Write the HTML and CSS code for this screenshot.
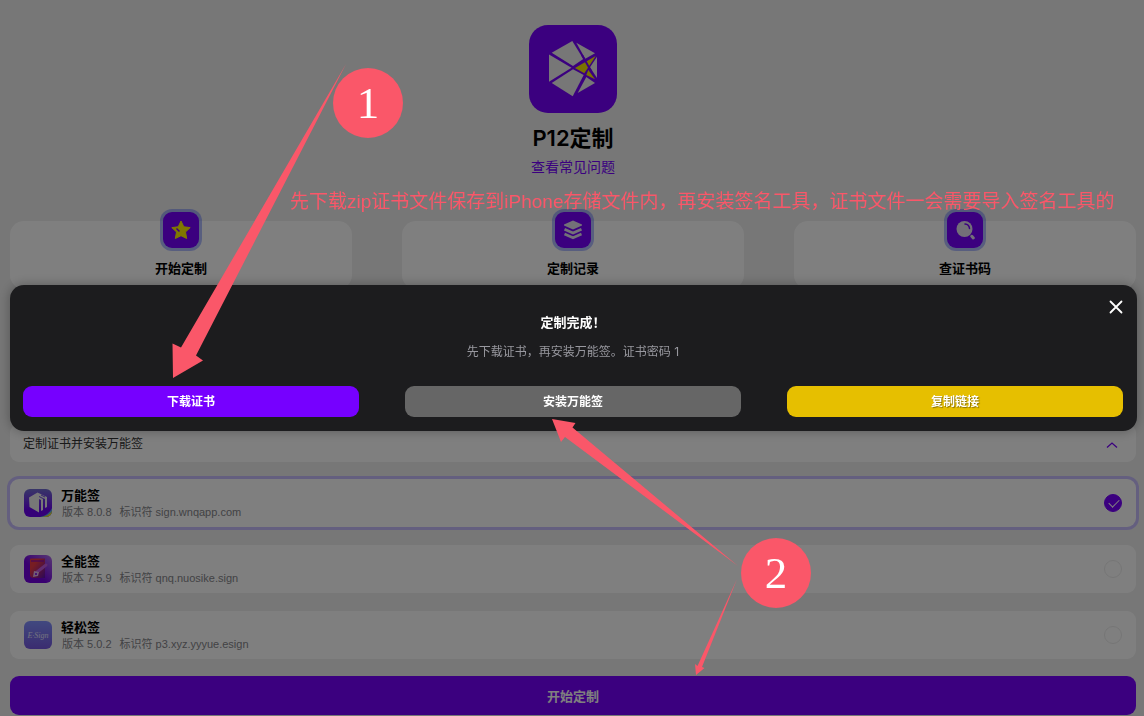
FILE: index.html
```html
<!DOCTYPE html>
<html lang="zh-CN">
<head>
    <meta charset="UTF-8">
    <meta name="viewport" content="width=device-width, initial-scale=1.0">
    <title>P12定制</title>
    <link rel="stylesheet" href="styles.css">
</head>
<body>
    <main class="page">
        <header class="header">
            <svg class="header__logo" viewBox="0 0 88 88">
                <rect width="88" height="88" rx="19" fill="#7600ff"/>
                <g fill="#eee">
                    <path d="M20 29.5 42.5 42.7 20 56.7z"/>
                    <path d="M22.7 27.7 43.3 16 54.3 34 44 41z"/>
                    <path d="M47.3 17.7 66 28.3 56.3 33.7z"/>
                    <path d="M68 31.7V53L61 42.3z"/>
                    <path d="M22.7 58 44 44.3 54.7 50 43.7 71.3z"/>
                    <path d="M57.3 52 66 58 48.7 68z"/>
                </g>
                <path d="M46 43 66.7 31 55.3 48.3zM59.3 45 66 54.3 57.3 50z" fill="#f4e400"/>
                <path d="M53 30 62 46" stroke="#7600ff" stroke-width="2"/>
            </svg>
            <h1 class="header__title">P12定制</h1>
            <a class="header__link" href="#">查看常见问题</a>
        </header>

        <nav class="features">
            <a class="feature" href="#">
                <span class="feature__icon">
                    <svg viewBox="0 0 20 20"><path d="M10 1l2.8 5.8 6.4.8-4.7 4.4 1.2 6.5L10 15.7 4.3 18.5 5.5 12 .8 7.6l6.4-.8z" fill="#fff000" stroke="#fff000" stroke-linejoin="round"/><path d="M5.5 8.5 8.5 11.5" stroke="#7600ff" stroke-width="1.5"/></svg>
                </span>
                <span class="feature__label">开始定制</span>
            </a>
            <a class="feature" href="#">
                <span class="feature__icon">
                    <svg viewBox="0 0 20 20"><path d="M10 .5 19 4.5v1L10 9.500 1 5.500v-1z" fill="#e6e0f0"/><path d="M1.5 9.200 10 13l8.500-3.800M1.500 14 10 17.800 18.500 14" fill="none" stroke="#e6e0f0" stroke-width="2.6"/></svg>
                </span>
                <span class="feature__label">定制记录</span>
            </a>
            <a class="feature" href="#">
                <span class="feature__icon">
                    <svg viewBox="0 0 20 20"><circle cx="9.5" cy="9" r="8" fill="#e6e0f0"/><path d="M10 4a5 5 0 0 1 4.500 4.500" fill="none" stroke="#7600ff" stroke-width="1.5" stroke-linecap="round"/><path d="M16.800 16.300 18.300 18" stroke="#e6e0f0" stroke-width="3" stroke-linecap="round"/></svg>
                </span>
                <span class="feature__label">查证书码</span>
            </a>
        </nav>

        <button type="button" class="collapse">
            <span>定制证书并安装万能签</span>
            <svg class="collapse__arrow" viewBox="0 0 12 12"><path d="M1 9.5 6 5l5 4.500" fill="none" stroke="#7600ff" stroke-width="1.3"/></svg>
        </button>

        <div class="tools">
            <label class="tool tool_active">
                <svg class="tool__icon" viewBox="0 0 28 28">
                    <defs>
                        <linearGradient id="wn" x1="0" y1="0" x2="0" y2="1"><stop offset="0" stop-color="#716dd0"/><stop offset=".75" stop-color="#6a00f0"/></linearGradient>
                        <clipPath id="round"><rect width="28" height="28" rx="6"/></clipPath>
                    </defs>
                    <g clip-path="url(#round)">
                        <rect width="28" height="28" fill="url(#wn)"/>
                        <path d="M16 28q9-2 12-9v9z" fill="#5aa8e8"/>
                        <path d="M18 28q7-1 10-6v6z" fill="#f0e020"/>
                        <path d="M5 8.500 13.500 3.500 23 8v10l-2 1V10l-2-1v12l-2 1V11l-2-1v13.500L5.500 18z" fill="#eee"/>
                        <path d="M15 7.500 19 9.500M17 6l4 2" stroke="#6d4be0"/>
                    </g>
                </svg>
                <span class="tool__text">
                    <span class="tool__name">万能签</span>
                    <span class="tool__info"><span>版本 8.0.8</span><span>标识符 sign.wnqapp.com</span></span>
                </span>
                <input class="tool__radio" type="radio" name="tool" checked>
            </label>
            <label class="tool">
                <svg class="tool__icon" viewBox="0 0 28 28">
                    <defs>
                        <linearGradient id="qn" x1="0" y1="1" x2="1" y2="0"><stop offset=".4" stop-color="#7200e0"/><stop offset="1" stop-color="#b070e8"/></linearGradient>
                        <linearGradient id="book" x1="0" y1="0" x2="1" y2="1"><stop offset=".3" stop-color="#ee3a44"/><stop offset="1" stop-color="#5a10b0"/></linearGradient>
                    </defs>
                    <rect width="28" height="28" rx="6" fill="url(#qn)"/>
                    <path d="M6 4.500Q6 3.500 7 3.500H21V23H10Q6 23 6 20z" fill="url(#book)"/>
                    <path d="M7 6H20" stroke="#7800c8"/>
                    <path d="M22 10 13 17" stroke="#c45ae0" stroke-width="3" stroke-linecap="round"/>
                    <path d="M10 16l5 1-1 4-5 1z" fill="#e6b8ec"/>
                    <circle cx="12" cy="19" r="1" fill="#7200e0"/>
                </svg>
                <span class="tool__text">
                    <span class="tool__name">全能签</span>
                    <span class="tool__info"><span>版本 7.5.9</span><span>标识符 qnq.nuosike.sign</span></span>
                </span>
                <input class="tool__radio" type="radio" name="tool">
            </label>
            <label class="tool">
                <svg class="tool__icon" viewBox="0 0 28 28">
                    <defs>
                        <linearGradient id="es" x1="0" y1="0" x2="0" y2="1"><stop offset="0" stop-color="#8292ff"/><stop offset="1" stop-color="#7558e0"/></linearGradient>
                    </defs>
                    <rect width="28" height="28" rx="6" fill="url(#es)"/>
                    <text class="tool__sign" x="14" y="17" text-anchor="middle">E·Sign</text>
                </svg>
                <span class="tool__text">
                    <span class="tool__name">轻松签</span>
                    <span class="tool__info"><span>版本 5.0.2</span><span>标识符 p3.xyz.yyyue.esign</span></span>
                </span>
                <input class="tool__radio" type="radio" name="tool">
            </label>
        </div>

        <button type="button" class="submit">开始定制</button>
    </main>

    <div class="overlay">
        <section class="modal" role="dialog" aria-labelledby="modal-title">
            <button type="button" class="modal__close">
                <svg viewBox="0 0 14 14"><path d="M1.5 1.5l11 11M12.5 1.5l-11 11" stroke="#fff" stroke-width="1.8" stroke-linecap="round"/></svg>
            </button>
            <h2 class="modal__title" id="modal-title">定制完成！</h2>
            <p class="modal__text">先下载证书，再安装万能签。证书密码 1</p>
            <div class="modal__buttons">
                <button type="button" class="btn btn_purple">下载证书</button>
                <button type="button" class="btn btn_gray">安装万能签</button>
                <button type="button" class="btn btn_yellow">复制链接</button>
            </div>
        </section>
    </div>

    <!-- step marks over the page -->
    <div class="guide">
        <svg class="guide__arrows" viewBox="0 0 1144 716">
            <path d="M346 64 196 355.5 203 360.5 173 378 172.5 343.5 181 347.5z"/>
            <path d="M738 566 572.5 427.5 575.5 423 552 419 561 442 565 437z"/>
            <path d="M737 579 697.5 666 695 664 696 675 704.5 668 702 667z"/>
        </svg>
        <p class="guide__note">先下载zip证书文件保存到iPhone存储文件内，再安装签名工具，证书文件一会需要导入签名工具的</p>
        <span class="step step_one">1</span>
        <span class="step step_two">2</span>
    </div>
</body>
</html>
```

FILE: styles.css
```css
* {
    box-sizing: border-box;
}
body {
    margin: 0;
    background-color: #eeeeee;
    font-family: Inter, "Noto Sans CJK SC", sans-serif;
    font-size: 13px;
    line-height: 20px;
    color: #000;
}
button {
    border: none;
    font-family: inherit;
    cursor: pointer;
}
a {
    color: inherit;
    text-decoration: none;
}
.page {
    padding: 25px 8px 1px 10px;
}
.header {
    display: flex;
    flex-direction: column;
    align-items: center;
}
.header__logo {
    width: 88px;
    height: 88px;
}
.header__title {
    margin: 10px 0 4px;
    font-size: 22px;
    line-height: 30px;
    font-weight: 600;
}
.header__link {
    font-size: 14px;
    color: #7600ff;
}
.features {
    display: grid;
    grid-template-columns: repeat(3, 1fr);
    gap: 50px;
    margin-top: 44px;
}
.feature {
    display: flex;
    flex-direction: column;
    align-items: center;
    gap: 10px;
    padding-bottom: 11px;
    border-radius: 14px;
    background-color: #fff;
}
.feature__icon {
    display: flex;
    align-items: center;
    justify-content: center;
    width: 36px;
    height: 36px;
    margin-top: -9px;
    border-radius: 9px;
    background-color: #7600ff;
    box-shadow: 0 0 0 3px rgba(60, 90, 255, .4);
}
.feature__icon svg {
    width: 20px;
    height: 20px;
}
.feature__label {
    font-weight: 700;
}
.collapse {
    display: flex;
    align-items: center;
    justify-content: space-between;
    width: 100%;
    margin-top: 135px;
    padding: 10px 18px 8px 13px;
    border-radius: 9px;
    background-color: #fff;
    font-size: 12px;
    line-height: 20px;
    color: #333;
}
.collapse__arrow {
    width: 12px;
    height: 12px;
}
.tools {
    display: flex;
    flex-direction: column;
    gap: 18px;
    margin: 17px 0;
}
.tool {
    display: flex;
    align-items: center;
    gap: 9px;
    height: 48px;
    padding: 0 14px;
    border-radius: 9px;
    background-color: #fff;
}
.tool_active {
    box-shadow: 0 0 0 3px #c9bfff;
}
.tool__icon {
    width: 28px;
    height: 28px;
}
.tool__text {
    display: flex;
    flex: 1;
    flex-direction: column;
}
.tool__name {
    line-height: 18px;
    font-weight: 700;
}
.tool__info {
    display: flex;
    gap: 8px;
    padding-left: 1px;
    font-family: "Liberation Sans", "Noto Sans CJK SC", sans-serif;
    font-size: 11px;
    line-height: 17px;
    color: #85858a;
}
.tool__sign {
    font-family: "Liberation Serif", serif;
    font-size: 8px;
    font-style: italic;
    fill: #e4e4ff;
}
.tool__radio {
    appearance: none;
    width: 18px;
    height: 18px;
    margin: 0;
    border: 1px solid #ececec;
    border-radius: 50%;
}
.tool__radio:checked {
    position: relative;
    border-color: #7600ff;
    background-color: #7600ff;
}
.tool__radio:checked::after {
    content: "";
    position: absolute;
    left: 4px;
    top: 4px;
    width: 9px;
    height: 5px;
    border-left: 1px solid #fff;
    border-bottom: 1px solid #fff;
    transform: rotate(-45deg);
}
.submit {
    display: block;
    width: 100%;
    height: 39px;
    border-radius: 9px;
    background-color: #7600ff;
    font-size: 13px;
    font-weight: 700;
    color: #fff;
}
.overlay {
    position: fixed;
    inset: 0;
    display: flex;
    align-items: center;
    padding: 0 7px 0 10px;
    background-color: rgba(0, 0, 0, .5);
}
.modal {
    position: relative;
    width: 100%;
    padding: 27px 14px 14px 13px;
    border-radius: 14px;
    background-color: #1c1c1e;
    box-shadow: 0 0 12px rgba(0, 0, 0, .3);
    text-align: center;
}
.modal__close {
    position: absolute;
    top: 15px;
    right: 14px;
    padding: 0;
    background: none;
}
.modal__close svg {
    display: block;
    width: 14px;
    height: 14px;
}
.modal__title {
    margin: 0 0 10px;
    font-size: 13px;
    font-weight: 700;
    color: #fff;
}
.modal__text {
    margin: 0 0 24px;
    font-size: 12px;
    color: #98989f;
}
.modal__buttons {
    display: grid;
    grid-template-columns: repeat(3, 1fr);
    gap: 46px;
}
.btn {
    height: 31px;
    padding: 0 0 2px;
    border-radius: 9px;
    font-size: 12px;
    font-weight: 700;
    color: #fff;
}
.btn_purple {
    background-color: #7600ff;
}
.btn_gray {
    background-color: #666;
}
.btn_yellow {
    background-color: #e6bf00;
    text-shadow: 1px 1px 1px rgba(0, 0, 0, .4);
}
.guide {
    position: absolute;
    top: 0;
    left: 0;
    pointer-events: none;
}
.guide__arrows {
    display: block;
    width: 1144px;
    height: 716px;
    fill: #fa5769;
}
.guide__note {
    position: absolute;
    top: 189px;
    left: 290px;
    margin: 0;
    font-family: "Liberation Sans", "Noto Sans CJK SC", sans-serif;
    font-size: 19px;
    line-height: 26px;
    color: #fa5769;
    white-space: nowrap;
}
.step {
    position: absolute;
    display: flex;
    align-items: center;
    justify-content: center;
    width: 70px;
    height: 70px;
    border-radius: 50%;
    background-color: #fa5769;
    font-family: "Liberation Serif", serif;
    font-size: 45px;
    color: #fff;
}
.step_one {
    top: 68px;
    left: 333px;
}
.step_two {
    top: 538px;
    left: 741px;
}
```
